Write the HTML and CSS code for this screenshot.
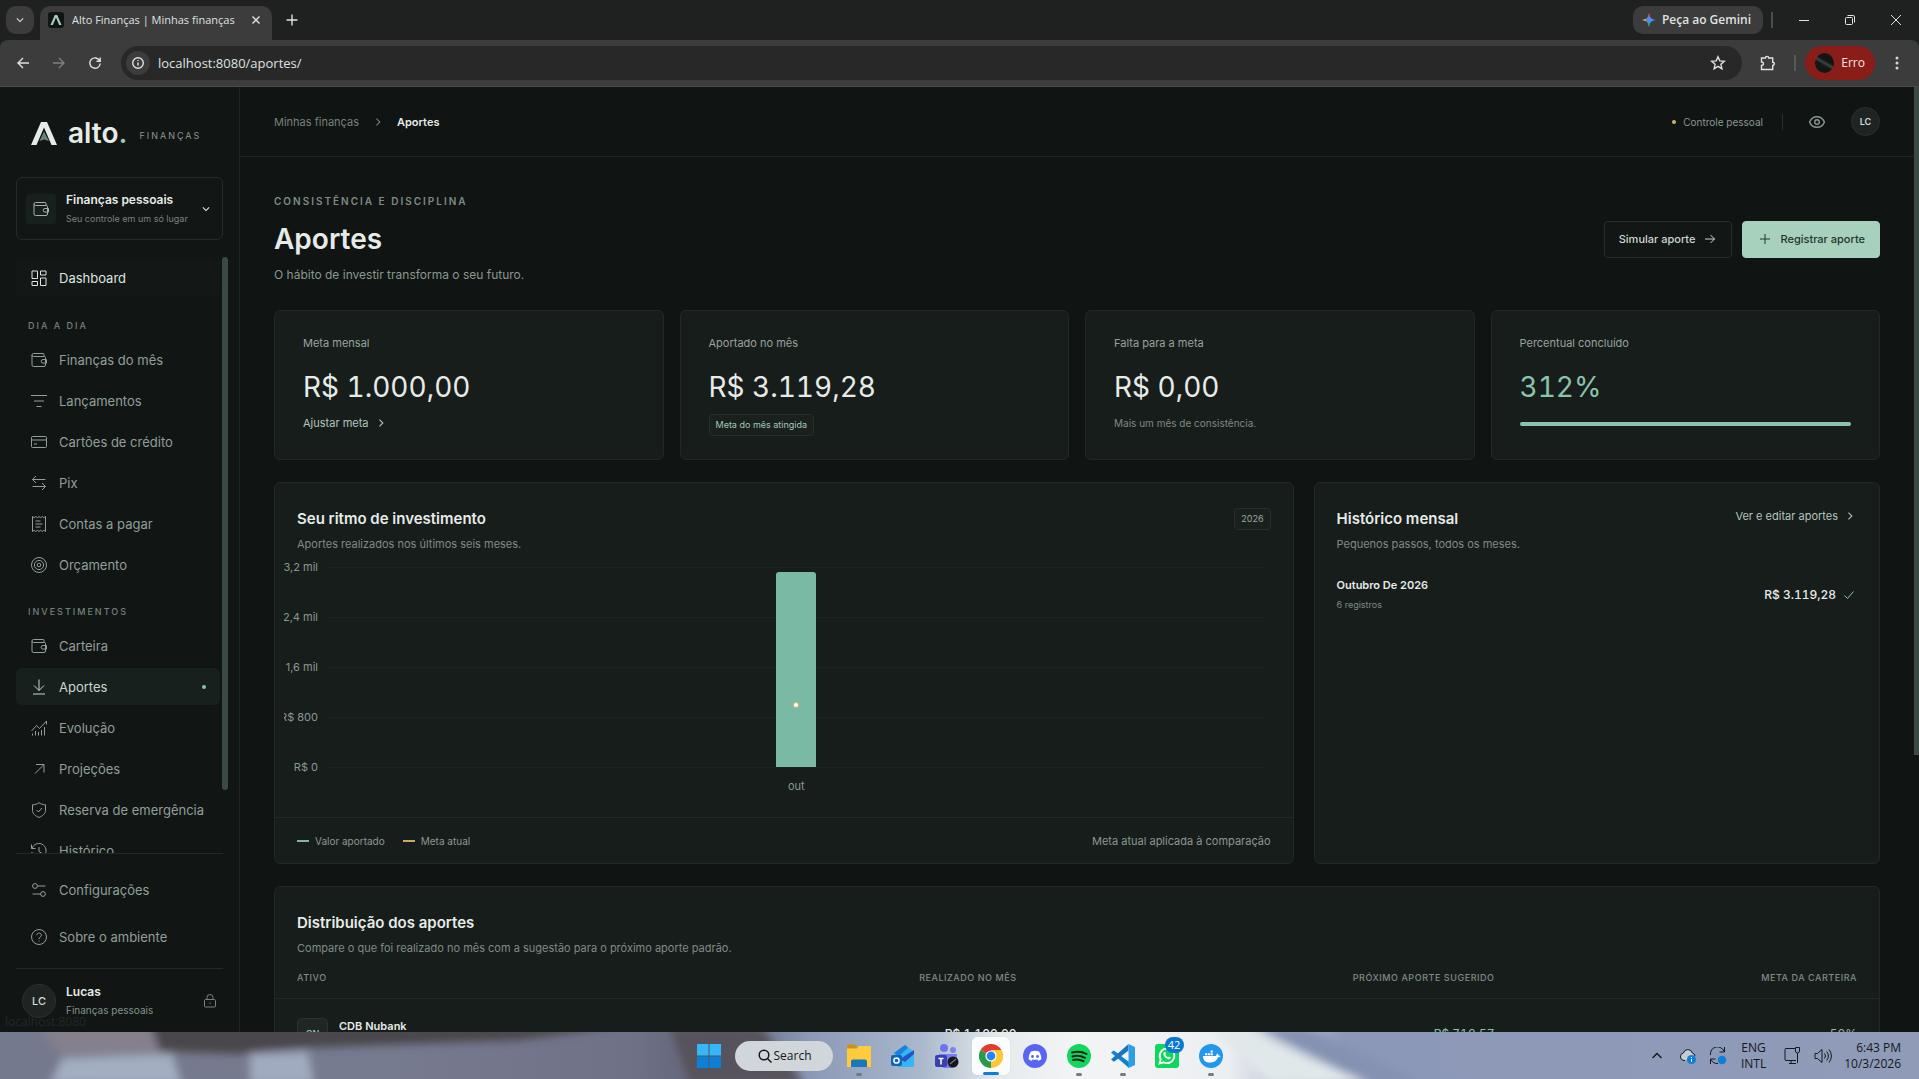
FILE: index.html
```html
<!DOCTYPE html>
<html lang="pt-BR">
<head>
<meta charset="utf-8">
<title>Alto Finanças | Minhas finanças</title>
<link rel="stylesheet" href="styles.css">
</head>
<body>
<svg class="sprite" aria-hidden="true">
  <symbol id="i-wallet" viewBox="0 0 16 16"><path d="M13 4.5V2.5a1 1 0 0 0-1-1H2.5a1.5 1.5 0 0 0 0 3H13.500a1 1 0 0 1 1 1V13a1.500 1.500 0 0 1-1.500 1.500H2.500A1.500 1.500 0 0 1 1 13V3"/><path d="M15.500 7.500h-3.500a1.800 1.800 0 0 0 0 3.600h3.500z"/></symbol>
  <symbol id="i-right" viewBox="0 0 16 16"><path d="M5.500 2.500L11 8l-5.500 5.500"/></symbol>
  <symbol id="i-down" viewBox="0 0 16 16"><path d="M3 5.500l5 5 5-5"/></symbol>
</svg>

<header class="browser">
  <div class="tabs">
    <button class="tab-search" aria-label="Pesquisar guias"><svg class="ic s10 chev"><use href="#i-down"/></svg></button>
    <div class="tab">
      <svg class="favicon" viewBox="0 0 16 16"><rect width="16" height="16" rx="3" fill="#111614"/><path d="M2.500 13L6.800 3h2.400l4.300 10h-2.300L8 5.600 4.800 13z" fill="#a7d0bd"/></svg>
      <span class="tab-title">Alto Finanças | Minhas finanças</span>
      <button class="bare" aria-label="Fechar"><svg class="ic s10 bold" viewBox="0 0 10 10"><path d="M1.500 1.500l7 7M8.500 1.500l-7 7"/></svg></button>
    </div>
    <button class="bare new-tab" aria-label="Nova guia"><svg class="ic s12 bold" viewBox="0 0 12 12"><path d="M6 .5v11M.5 6h11"/></svg></button>
    <div class="window-tools">
      <button class="gemini"><svg class="spark" viewBox="0 0 14 14"><defs><linearGradient id="gm" x1="0" y1="0" x2="1" y2="1"><stop offset="0" stop-color="#ea6a3c"/><stop offset=".45" stop-color="#4b8df8"/><stop offset="1" stop-color="#2f9de0"/></linearGradient></defs><path d="M7 0c.6 4.600 2.400 6.400 7 7-4.600.6-6.400 2.400-7 7-.6-4.600-2.400-6.400-7-7 4.600-.6 6.400-2.400 7-7z" fill="url(#gm)"/><path d="M7 0c-.2 1.600-.6 2.800-1.200 3.800h2.400C7.600 2.800 7.200 1.600 7 0z" fill="#ea4335"/><path d="M0 7c1.600-.2 2.800-.6 3.800-1.200v2.400C2.800 7.600 1.600 7.200 0 7z" fill="#f2b51d"/><path d="M7 14c-.2-1.600-.6-2.800-1.200-3.800h2.400C7.600 11.200 7.200 12.400 7 14z" fill="#27b35a"/></svg>Peça ao Gemini</button>
      <span class="bar"></span>
      <button class="bare win" aria-label="Minimizar"><svg class="ic s10" viewBox="0 0 10 10"><path d="M0 5.500h10"/></svg></button>
      <button class="bare win" aria-label="Restaurar"><svg class="ic s10" viewBox="0 0 10 10"><rect x=".5" y="2.500" width="7" height="7" rx="1"/><path d="M2.500.5H8A1.500 1.500 0 0 1 9.500 2v5.500"/></svg></button>
      <button class="bare win" aria-label="Fechar janela"><svg class="ic s10" viewBox="0 0 10 10"><path d="M0 0l10 10M10 0L0 10"/></svg></button>
    </div>
  </div>
  <div class="toolbar">
    <button class="bare nav-btn" aria-label="Voltar"><svg class="ic s12 bold" viewBox="0 0 12 12"><path d="M12 6H1M6 1L1 6l5 5"/></svg></button>
    <button class="bare nav-btn off" aria-label="Avançar"><svg class="ic s12 bold" viewBox="0 0 12 12"><path d="M0 6h11M6 1l5 5-5 5"/></svg></button>
    <button class="bare nav-btn" aria-label="Recarregar"><svg class="ic s12 bold" viewBox="0 0 12 12"><path d="M10.800 4A5.200 5.200 0 1 0 11.200 6.500M11.200.5V4.200H7.500"/></svg></button>
    <form class="omnibox">
      <span class="info"><svg class="ic s12 bold" viewBox="0 0 12 12"><circle cx="6" cy="6" r="5.300"/><path d="M6 5.500v3M6 3v1"/></svg></span>
      <input class="url" aria-label="Endereço" value="localhost:8080/aportes/">
      <svg class="ic s16 bold" viewBox="0 0 16 16"><path d="M8 1.800l1.800 4.100 4.500.4-3.400 3 1 4.400L8 11.400l-3.900 2.300 1-4.400-3.400-3 4.500-.4z"/></svg>
    </form>
    <button class="bare ext" aria-label="Extensões"><svg class="ic s16 bold" viewBox="0 0 16 16"><path d="M1.500 3h4a1.600 1.600 0 0 1 3.200 0h4v4.200a1.600 1.600 0 0 1 0 3.200v4.100H1.500v-4.100c2.600 0 2.600-3.400 0-3.400z"/></svg></button>
    <span class="bar"></span>
    <button class="profile"><span class="pic"></span>Erro</button>
    <button class="bare more" aria-label="Menu"><svg class="s16" viewBox="0 0 16 16" fill="#d3d6d5"><circle cx="8" cy="3" r="1.500"/><circle cx="8" cy="8" r="1.500"/><circle cx="8" cy="13" r="1.500"/></svg></button>
  </div>
</header>

<div class="app">
  <aside class="sidebar">
    <a class="brand" href="#">
      <svg class="logo" viewBox="0 0 26 23"><path d="M0 23L10 0h6l10 23h-5.500L13 5.500 5.500 23z" fill="#e6ebe8"/><path d="M13 9.500l5 9.500-5-1.500L8.500 19z" fill="#6b7f77"/></svg>
      <span class="word">alto<i>.</i></span><span class="brand-sub">FINANÇAS</span>
    </a>
    <button class="workspace">
      <span class="ws-icon"><svg class="ic s16"><use href="#i-wallet"/></svg></span>
      <span class="ws-text"><strong>Finanças pessoais</strong><small>Seu controle em um só lugar</small></span>
      <svg class="ic s10 chev"><use href="#i-down"/></svg>
    </button>
    <div class="nav-wrap">
    <nav class="nav">
      <a class="item home" href="#"><svg class="ic s16" viewBox="0 0 16 16"><path d="M1 1h5.500v7.500H1zM9.500 1H15v4H9.500zM1 11.500h5.500v4H1zM9.500 8H15v7.500H9.500z"/></svg>Dashboard</a>
      <h2>DIA A DIA</h2>
      <a class="item" href="#"><svg class="ic s16"><use href="#i-wallet"/></svg>Finanças do mês</a>
      <a class="item" href="#"><svg class="ic s16" viewBox="0 0 16 16"><path d="M0 2.500h16M3 8h10M5.500 13.500h5"/></svg>Lançamentos</a>
      <a class="item" href="#"><svg class="ic s16" viewBox="0 0 16 16"><rect x=".5" y="2.500" width="15" height="11" rx="1"/><path d="M.5 6h15M3 10h3"/></svg>Cartões de crédito</a>
      <a class="item" href="#"><svg class="ic s16" viewBox="0 0 16 16"><path d="M14.500 4.500H1.500M5 1L1.500 4.500 5 8M1.500 11.500h13M11 8l3.500 3.500L11 15"/></svg>Pix</a>
      <a class="item" href="#"><svg class="ic s16" viewBox="0 0 16 16"><path d="M1.500.5l1.600 1.200L4.700.5l1.700 1.200L8 .5l1.600 1.200L11.300.5l1.600 1.200L14.500.5v15l-1.600-1.200-1.600 1.200-1.700-1.200L8 15.500l-1.600-1.200-1.700 1.200-1.600-1.200-1.600 1.200z"/><path d="M4.500 5h5M4.500 8h7M4.500 11h5"/></svg>Contas a pagar</a>
      <a class="item" href="#"><svg class="ic s16" viewBox="0 0 16 16"><circle cx="8" cy="8" r="7.500"/><circle cx="8" cy="8" r="4.600"/><circle cx="8" cy="8" r="1.800"/></svg>Orçamento</a>
      <h2>INVESTIMENTOS</h2>
      <a class="item" href="#"><svg class="ic s16"><use href="#i-wallet"/></svg>Carteira</a>
      <a class="item active" href="#"><svg class="ic s16" viewBox="0 0 16 16"><path d="M8 .5v11M3 6.500l5 5 5-5M2 15h12"/></svg>Aportes<span class="dot"></span></a>
      <a class="item" href="#"><svg class="ic s16" viewBox="0 0 16 16"><path d="M.5 11l5-5.500 3 3L15.500 1M15.500 1v3.500M1.500 13.500v2M4.500 11v4.500M7.500 12v3.500M10.500 10v5.500M13.500 7v8.500"/></svg>Evolução</a>
      <a class="item" href="#"><svg class="ic s16" viewBox="0 0 16 16"><path d="M4 12.500l8.500-8.500M5 3.500h8v8"/></svg>Projeções</a>
      <a class="item" href="#"><svg class="ic s16" viewBox="0 0 16 16"><path d="M8 .7c2 1.400 4 2 6.500 2.100v5.500c0 3.500-3 5.700-6.500 7.200-3.500-1.500-6.500-3.700-6.500-7.200V2.800C4 2.700 6 2.100 8 .7z"/><path d="M5.500 8l2 2 3.500-4"/></svg>Reserva de emergência</a>
      <a class="item" href="#"><svg class="ic s16" viewBox="0 0 16 16"><path d="M.5 1.500v4h4M1 5.500A7.200 7.200 0 1 1 .8 9M8 4v4.500l3 2"/></svg>Histórico</a>
    </nav>
    <span class="nav-scroll"></span>
    </div>
    <nav class="nav-foot">
      <a class="item" href="#"><svg class="ic s16" viewBox="0 0 16 16"><circle cx="4" cy="4" r="2.400"/><circle cx="12" cy="12" r="2.400"/><path d="M6.500 4h8M9.500 12h-8"/></svg>Configurações</a>
      <a class="item" href="#"><svg class="ic s16" viewBox="0 0 16 16"><circle cx="8" cy="8" r="7.500"/><path d="M5.800 6.200c0-3 4.600-2.800 4.600 0C10.400 8 8 8 8 10M8 11.500v1"/></svg>Sobre o ambiente</a>
    </nav>
    <div class="user">
      <span class="avatar big">LC</span>
      <span class="user-text"><strong>Lucas</strong><small>Finanças pessoais</small></span>
      <svg class="ic s14" viewBox="0 0 14 14"><rect x="1.500" y="5.500" width="11" height="7.500" rx="1"/><path d="M4 5.500V3.500a3 3 0 0 1 6 0v2M7 8.500v1.500"/></svg>
    </div>
    <span class="status">localhost:8080</span>
  </aside>

  <div class="page">
    <header class="top">
      <nav class="crumbs"><a href="#">Minhas finanças</a><svg class="ic s10 chev"><use href="#i-right"/></svg><strong>Aportes</strong></nav>
      <div class="top-right">
        <span class="mode"><i></i>Controle pessoal</span>
        <span class="rule"></span>
        <button class="bare eye" aria-label="Ocultar valores"><svg class="ic s16 bold" viewBox="0 0 16 16"><path d="M.6 8C2 4.500 4.800 2.700 8 2.700S14 4.500 15.400 8C14 11.500 11.200 13.300 8 13.300S2 11.500.6 8z"/><circle cx="8" cy="8" r="2.300"/></svg></button>
        <span class="avatar">LC</span>
      </div>
    </header>

    <main class="content">
      <section class="hero">
        <div>
          <p class="eyebrow">CONSISTÊNCIA E DISCIPLINA</p>
          <h1>Aportes</h1>
          <p class="lead">O hábito de investir transforma o seu futuro.</p>
        </div>
        <div class="actions">
          <button class="btn">Simular aporte<svg class="ic s10" viewBox="0 0 10 10"><path d="M0 5h9.500M5.500 1l4 4-4 4"/></svg></button>
          <button class="btn primary"><svg class="ic s10" viewBox="0 0 10 10"><path d="M5 0v10M0 5h10"/></svg>Registrar aporte</button>
        </div>
      </section>

      <section class="stats">
        <article class="card stat"><p class="label">Meta mensal</p><p class="value">R$ 1.000,00</p><a class="link" href="#">Ajustar meta<svg class="ic s10 chev"><use href="#i-right"/></svg></a></article>
        <article class="card stat"><p class="label">Aportado no mês</p><p class="value">R$ 3.119,28</p><span class="badge">Meta do mês atingida</span></article>
        <article class="card stat"><p class="label">Falta para a meta</p><p class="value">R$ 0,00</p><p class="note">Mais um mês de consistência.</p></article>
        <article class="card stat"><p class="label">Percentual concluído</p><p class="value good">312%</p><div class="progress"><span></span></div></article>
      </section>

      <section class="panels">
        <article class="card rhythm">
          <header class="panel-head">
            <div><h3>Seu ritmo de investimento</h3><p>Aportes realizados nos últimos seis meses.</p></div>
            <span class="badge year">2026</span>
          </header>
          <div class="chart">
            <div class="tick"><span>3,2 mil</span></div>
            <div class="tick"><span>2,4 mil</span></div>
            <div class="tick"><span>1,6 mil</span></div>
            <div class="tick"><span>R$ 800</span></div>
            <div class="tick"><span>R$ 0</span></div>
            <div class="plot"><div class="col"><i></i></div></div>
            <span class="month">out</span>
          </div>
          <footer class="legend"><span class="key">Valor aportado</span><span class="key gold">Meta atual</span><span class="hint">Meta atual aplicada à comparação</span></footer>
        </article>
        <article class="card history">
          <header class="panel-head">
            <div><h3>Histórico mensal</h3><p>Pequenos passos, todos os meses.</p></div>
            <a class="link" href="#">Ver e editar aportes<svg class="ic s10 chev"><use href="#i-right"/></svg></a>
          </header>
          <div class="entry">
            <div><strong>Outubro De 2026</strong><small>6 registros</small></div>
            <span class="amount">R$ 3.119,28<svg class="ic s10" viewBox="0 0 10 10"><path d="M.5 5.500L3.500 8.500 9.500 1.500"/></svg></span>
          </div>
        </article>
      </section>

      <section class="card dist">
        <header class="panel-head"><div><h3>Distribuição dos aportes</h3><p>Compare o que foi realizado no mês com a sugestão para o próximo aporte padrão.</p></div></header>
        <table>
          <thead><tr><th>ATIVO</th><th>REALIZADO NO MÊS</th><th>PRÓXIMO APORTE SUGERIDO</th><th>META DA CARTEIRA</th></tr></thead>
          <tbody><tr>
            <td><div class="asset"><span class="tile">CN</span><div><strong>CDB Nubank</strong><small>Renda fixa</small></div></div></td>
            <td class="strong">R$ 1.100,00</td><td class="mint">R$ 710,57</td><td>50%</td>
          </tr></tbody>
        </table>
      </section>
    </main>
    <span class="page-scroll"></span>
  </div>
</div>

<footer class="taskbar">
  <svg class="wall" viewBox="0 0 1919 47" preserveAspectRatio="none" aria-hidden="true">
    <defs>
      <linearGradient id="wg"><stop offset="0" stop-color="#75798e"/><stop offset=".2" stop-color="#777b90"/><stop offset=".33" stop-color="#6f7187"/><stop offset=".38" stop-color="#5d5f73"/><stop offset=".42" stop-color="#8a98b6"/><stop offset=".48" stop-color="#a9b8cc"/><stop offset=".52" stop-color="#e6eaec"/><stop offset=".56" stop-color="#f3f4f6"/><stop offset=".64" stop-color="#eceff1"/><stop offset=".7" stop-color="#8c98b7"/><stop offset="1" stop-color="#8f9bb7"/></linearGradient>
      <filter id="soft" x="-10%" y="-50%" width="120%" height="200%"><feGaussianBlur stdDeviation="4"/></filter>
    </defs>
    <rect width="1919" height="47" fill="url(#wg)"/>
    <g filter="url(#soft)">
      <path d="M40 -5H270V22H60z" fill="#85808c"/><path d="M150 -8H400L620-6 520 8 300 16 240 22 160 20z" fill="#4a474c"/>
      <path d="M62 26l110-4 10 30H50z" fill="#a3aec2"/><path d="M250 22l58-2 6 32h-64z" fill="#a0abc0"/>
      <path d="M670-5h90l45 57H690z" fill="#57535c"/><path d="M1210-5h30l130 57h-100z" fill="#e0e8ea"/>
      <path d="M1255-5h50l120 57h-50z" fill="#8592b2"/>
    </g>
  </svg>
  <div class="apps">
    <button class="app-btn" aria-label="Iniciar"><svg viewBox="0 0 24 24"><path d="M0 0h11.500v11.500H0zM12.500 0H24v11.500H12.500z" fill="#35b6f6"/><path d="M0 12.500h11.500V24H0zM12.500 12.500H24V24H12.500z" fill="#0a80d8"/></svg></button>
    <button class="search"><svg viewBox="0 0 14 14"><circle cx="6" cy="6" r="4.800"/><path d="M9.500 9.500l4 4"/></svg>Search</button>
    <button class="app-btn run" aria-label="Explorador"><svg viewBox="0 0 24 24"><path d="M0 2a1.500 1.500 0 0 1 1.500-1.500h6L10 3v5H0z" fill="#c99416"/><path d="M0 4.500h10L11.500 2H23a1 1 0 0 1 1 1v20H0z" fill="#ffcb3d"/><path d="M4 23v-5.500a2 2 0 0 1 2-2h12a2 2 0 0 1 2 2V23z" fill="#1a77bd"/></svg></button>
    <button class="app-btn" aria-label="Outlook"><svg viewBox="0 0 24 24"><path d="M3 9l11-8 9 7v13a2 2 0 0 1-2 2H7z" fill="#36b5f5"/><path d="M3 9L14 1l3 2.500L8 12z" fill="#1d80dc"/><path d="M9 15l14-9v4l-9 8z" fill="#2456c4"/><rect x="0" y="11" width="11" height="11" rx="2" fill="#0f64bd"/><circle cx="5.500" cy="16.500" r="2.600" fill="none" stroke="#fff" stroke-width="1.500"/></svg></button>
    <button class="app-btn" aria-label="Teams"><svg viewBox="0 0 24 24"><circle cx="9" cy="4" r="4" fill="#6d75ea"/><circle cx="18" cy="6" r="3" fill="#7d84f1"/><path d="M4 10h18v8a6 6 0 0 1-6 6h-6a6 6 0 0 1-6-6z" fill="#7780ef"/><rect x="0" y="11" width="12" height="12" rx="2" fill="#3a40b0"/><path d="M3.500 14.500h5M6 14.500v6" stroke="#fff" stroke-width="1.500"/><circle cx="18" cy="18" r="5.500" fill="#16171b"/><path d="M15 20l6-5" stroke="#777" stroke-width="1.200"/></svg></button>
    <button class="app-btn current" aria-label="Chrome"><svg viewBox="0 0 24 24"><path d="M12 12L1.600 6A12 12 0 0 1 22.400 6z" fill="#e33b2e"/><path d="M12 12L22.400 6A12 12 0 0 1 12 24z" fill="#fcc934"/><path d="M12 12l0 12A12 12 0 0 1 1.600 6z" fill="#2a9a48"/><path d="M12 6h10.400a12 12 0 0 1-1.400 14l-9 4 5.500-9z" fill="#fcc934"/><circle cx="12" cy="12" r="5.600" fill="#fff"/><circle cx="12" cy="12" r="4.400" fill="#2684fc"/></svg></button>
    <button class="app-btn" aria-label="Discord"><svg viewBox="0 0 24 24"><circle cx="12" cy="12" r="12" fill="#5865f2"/><path d="M8 7.500c2.500-1 5.500-1 8 0 1.600 2.300 2.500 5 2.300 7.800-1 .8-2 1.200-3 1.500l-.8-1.400c-1.600.5-3.400.5-5 0l-.8 1.400c-1-.3-2-.7-3-1.500C5.500 12.500 6.400 9.800 8 7.500z" fill="#fff"/><circle cx="9.500" cy="12.500" r="1.400" fill="#5865f2"/><circle cx="14.500" cy="12.500" r="1.400" fill="#5865f2"/></svg></button>
    <button class="app-btn run" aria-label="Spotify"><svg viewBox="0 0 24 24"><circle cx="12" cy="12" r="12" fill="#12d65d"/><path d="M5 8.500c5-1.500 10-1 14.500 1.500M5.500 12.500c4-1.200 8.500-.8 12.500 1.300M6 16c3.500-1 7-.6 10.500 1.200" fill="none" stroke="#10241a" stroke-width="2" stroke-linecap="round"/></svg></button>
    <button class="app-btn run" aria-label="Visual Studio Code"><svg viewBox="0 0 24 24"><path d="M0 8.500L2.800 6.500 18 18v6z" fill="#1080d0"/><path d="M0 15.500L17.500 0v6.500L3 17.700z" fill="#1a74bf"/><path d="M17.500 0L24 3v18l-6.500 3z" fill="#2c9fe8"/></svg></button>
    <button class="app-btn" aria-label="WhatsApp"><svg viewBox="0 0 24 24"><rect width="24" height="24" rx="3" fill="#0fd75e"/><path d="M4.500 19.500l1.200-4a7.300 7.300 0 1 1 2.900 2.800z" fill="none" stroke="#fff" stroke-width="1.800"/><path d="M9 8.300c1-.8 1.500 0 2 1.500l-.7 1c.6 1.200 1.500 2 2.700 2.500l1-.9c1.600.6 2 1 1.500 1.900-1 1.500-3 1-4.700-.2C8.500 12.300 7.600 10 9 8.300z" fill="#fff"/></svg><span class="count">42</span></button>
    <button class="app-btn run" aria-label="Docker"><svg viewBox="0 0 24 24"><circle cx="12" cy="12" r="12" fill="#2396ed"/><path d="M4 12h13c.5-1.500 1-2.200 1.600-2.500.7.600 1 1.200 1 2 1 0 1.600.2 2 .5-.6 1-1.600 1.400-2.800 1.400C17.500 17 14.500 18.500 10.500 18.500 6 18.500 4 16 4 12z" fill="#fff"/><path d="M6 9.200h2.200v2H6zM8.800 9.200H11v2H8.800zM11.600 9.200h2.200v2h-2.200zM11.600 6.500h2.200v2h-2.200z" fill="#fff"/></svg></button>
  </div>
  <div class="tray">
    <svg class="ic s12 bold" viewBox="0 0 12 12"><path d="M1.500 8L6 3.500 10.500 8"/></svg>
    <svg class="ic s18" viewBox="0 0 18 18"><path d="M6 13.500H5a3.800 3.800 0 0 1-.6-7.500A4.600 4.600 0 0 1 13.300 6 3.500 3.500 0 0 1 16 9" fill="#c7ccd4"/><circle cx="12.500" cy="12.500" r="4.500" fill="#0a80dc" stroke="none"/><path d="M12.500 11.800v3M12.500 10v1" stroke="#fff"/></svg>
    <svg class="ic s18" viewBox="0 0 18 18"><path d="M1.500 8A7 7 0 0 1 15 4.500M15.500 0v5h-5M1.500 17v-5h5M2 12.500a7 7 0 0 0 7 4"/><circle cx="13" cy="13" r="4.300" fill="#0a80dc" stroke="none"/></svg>
    <span class="lang">ENG<br>INTL</span>
    <svg class="ic s18" viewBox="0 0 18 18"><path d="M11 1.500H2A1 1 0 0 0 1 2.500v10a1 1 0 0 0 1 1h10M5 16.500h7M7 13.500v3M11.500.5h4v3.500a2 2 0 0 1-4 0zM13.500 6v10"/></svg>
    <svg class="ic s18" viewBox="0 0 18 18"><path d="M1 6.500h2.500L8 2.500v13l-4.500-4H1zM10.500 6.500a4 4 0 0 1 0 5M12.700 4.500a7 7 0 0 1 0 9M15 2.500a10 10 0 0 1 0 13"/></svg>
    <span class="clock">6:43 PM<br>10/3/2026</span>
  </div>
</footer>
</body>
</html>
```
FILE: styles.css
```css
* { box-sizing: border-box; }
:root { --ui: Inter, "Liberation Sans", sans-serif; --sys: "Open Sans", "Noto Sans", sans-serif; --line: #222826; --card: #171d1b; --muted: #8b9791; --mint: #8ac3ab; }
html, body { height: 100%; }
body { margin: 0; display: flex; flex-direction: column; overflow: hidden; background: #101413; color: #e6ebe8; font-family: var(--ui); font-size: 11px; line-height: 16px; }
h1, h2, h3, p { margin: 0; }
a { color: inherit; text-decoration: none; }
button, input { font: inherit; color: inherit; }
button { border: 0; cursor: pointer; }
small { font-size: 9px; }
.sprite { position: absolute; width: 0; height: 0; }
.ic { flex: none; fill: none; stroke: currentColor; stroke-width: 1; }
.bold { stroke-width: 1.4; }
.chev { stroke-width: 1.7; }
.s10 { width: 10px; height: 10px; }
.s12 { width: 12px; height: 12px; }
.s14 { width: 14px; height: 14px; }
.s16 { width: 16px; height: 16px; }
.s18 { width: 18px; height: 18px; }
.bare { display: grid; place-items: center; padding: 0; background: none; }

/* browser chrome */
.browser { flex: none; background: #1f2120; font-family: var(--sys); color: #dfe2e1; font-size: 12px; }
.tabs { display: flex; align-items: center; height: 40px; padding-left: 6px; }
.tab-search { display: grid; place-items: center; width: 28px; height: 28px; border-radius: 10px; background: #3c3c3c; padding: 0; }
.tab { display: flex; align-items: center; align-self: end; gap: 8px; width: 232px; height: 34px; margin-left: 6px; padding: 0 11px 6px 8px; border-radius: 10px 10px 0 0; background: #3c3c3c; }
.favicon { width: 16px; height: 16px; flex: none; }
.tab-title { flex: 1; white-space: nowrap; overflow: hidden; font-size: 11px; }
.new-tab { width: 40px; height: 28px; }
.window-tools { display: flex; align-items: center; margin-left: auto; }
.gemini { display: flex; align-items: center; gap: 6px; height: 28px; padding: 0 12px 0 9px; border-radius: 10px; background: #3c3c3c; font-weight: 600; white-space: nowrap; }
.spark { width: 14px; height: 14px; }
.bar { width: 2px; height: 16px; margin: 0 8px; background: #4a4d4b; }
.win { width: 46px; height: 40px; }
.toolbar { display: flex; align-items: center; height: 47px; padding: 0 10px 1px 5px; background: #3c3c3c; border-bottom: 1px solid #4a4c4b; border-radius: 8px 8px 0 0; }
.nav-btn { width: 36px; height: 34px; }
.off { color: #7d817f; }
.omnibox { flex: 1; display: flex; align-items: center; height: 34px; margin-left: 8px; padding: 0 16px 0 5px; border-radius: 17px; background: #282828; }
.info { display: grid; place-items: center; width: 24px; height: 24px; border-radius: 50%; background: #3c3c3c; }
.url { flex: 1; margin-left: 8px; padding: 0; border: 0; outline: 0; background: none; font-size: 13px; }
.ext { width: 52px; height: 34px; }
.toolbar .bar { margin: 0 9px 0 0; background: #565b58; }
.profile { display: flex; align-items: center; gap: 7px; height: 34px; width: 70px; padding: 0 10px; border-radius: 17px; background: #8b1d18; color: #fbe5e2; }
.pic { width: 20px; height: 20px; border-radius: 50%; background: linear-gradient(30deg, #121615 40%, #3d4442 50%, #121615 60%); }
.more { width: 34px; height: 34px; margin-left: 5px; margin-right: -5px; }

/* shell */
.app { flex: 1; min-height: 0; display: flex; overflow: hidden; }
.sidebar { position: relative; flex: none; display: flex; flex-direction: column; width: 240px; padding: 29px 16px 0; background: #111615; border-right: 1px solid #1e2422; }
.brand { display: flex; align-items: center; padding-left: 15px; height: 34px; }
.logo { width: 26px; height: 23px; margin-right: 11px; }
.word { font-size: 28px; font-weight: 600; line-height: 32px; }
.word i { font-style: normal; color: #9fc7b5; }
.brand-sub { margin: 6px 0 0 12px; font-size: 9px; letter-spacing: 2px; color: #8a9590; }
.workspace { display: flex; align-items: center; gap: 10px; height: 63px; margin-top: 27px; padding: 0 11px 0 9px; border: 1px solid #252b28; border-radius: 6px; background: #121715; text-align: left; }
.ws-icon { display: grid; place-items: center; width: 30px; height: 30px; border-radius: 4px; background: #18201d; color: #a5afaa; }
.ws-text, .user-text { flex: 1; display: flex; flex-direction: column; gap: 4px; white-space: nowrap; }
.workspace strong { font-size: 12px; font-weight: 600; line-height: 16px; }
.workspace small { color: #78837e; font-size: 9px; line-height: 14px; }
.nav-wrap { flex: 1; min-height: 0; display: flex; gap: 2px; margin-top: 17px; margin-right: -5px; overflow: hidden; }
.nav { flex: 1; display: flex; flex-direction: column; gap: 4px; padding-top: 2px; }
.nav-scroll { width: 6px; height: 533px; border-radius: 3px; background: #3a4944; }
.item { flex: none; display: flex; align-items: center; gap: 12px; height: 37px; padding: 0 14px 0 15px; border-radius: 6px; color: #929e98; font-size: 13px; white-space: nowrap; }
.home { color: #dfe5e2; background: #131816; }
.nav h2 { margin: 17px 0 3px 12px; font-size: 9px; font-weight: 500; line-height: 16px; letter-spacing: 2px; color: #75807b; }
.nav .home + h2 { margin-top: 18px; }
.active { color: #c5d8cf; background: #18201d; }
.dot { width: 4px; height: 4px; margin-left: auto; border-radius: 50%; background: var(--mint); }
.nav-foot { display: flex; flex-direction: column; gap: 10px; padding: 17px 0 13px; border-top: 1px solid var(--line); }
.user { display: flex; align-items: center; gap: 10px; height: 64px; padding: 0 6px; border-top: 1px solid var(--line); color: #77827d; }
.user-text { gap: 2px; }
.user strong { font-size: 12px; font-weight: 600; color: #e6ebe8; }
.user small { font-size: 10px; line-height: 16px; color: #84908a; }
.status { position: absolute; left: 5px; bottom: 1px; color: #222826; font: 12px/18px var(--sys); }
.avatar { display: grid; place-items: center; width: 29px; height: 29px; border: 1px solid #2b312f; border-radius: 50%; background: #1f2423; color: #d3dad6; font-size: 9px; font-weight: 600; }
.big { width: 34px; height: 34px; font-size: 11px; font-weight: 500; }

/* page */
.page { position: relative; flex: 1; min-width: 0; }
.page-scroll { position: absolute; top: 0; right: 0; width: 5px; height: 668px; background: #3a4944; }
.top { display: flex; align-items: center; justify-content: space-between; height: 70px; margin-right: 5px; padding: 0 34px; border-bottom: 1px solid #1e2422; }
.crumbs { display: flex; align-items: center; gap: 14px; color: #75807b; }
.crumbs strong { font-weight: 600; color: #e6ebe8; }
.top-right { display: flex; align-items: center; }
.mode { display: flex; align-items: center; gap: 7px; color: #8b9791; font-size: 10px; }
.mode i { width: 4px; height: 4px; border-radius: 50%; background: #c9b172; }
.rule { width: 1px; height: 16px; margin: 0 26px 0 19px; background: #2a302e; }
.eye { margin-right: 26px; color: #8b9791; }
.content { display: flex; flex-direction: column; padding: 36px 39px 0 34px; }
.hero { display: flex; justify-content: space-between; align-items: center; }
.eyebrow { font-size: 10px; font-weight: 600; letter-spacing: 2px; color: #7f8b85; }
h1 { margin-top: 8px; font-size: 28px; font-weight: 600; line-height: 44px; }
.lead { margin-top: 4px; font-size: 12px; line-height: 20px; color: var(--muted); }
.actions { display: flex; gap: 10px; }
.btn { display: flex; align-items: center; gap: 10px; height: 37px; padding: 0 16px 0 14px; border: 1px solid #272d2b; border-radius: 4px; background: #121715; color: #cdd6d1; font-weight: 500; }
.primary { padding: 0 14px 0 17px; border-color: #a7d0bd; background: #a7d0bd; color: #23362e; }
.card { border: 1px solid var(--line); border-radius: 6px; background: var(--card); }
.stats { display: grid; grid-template-columns: repeat(4, 1fr); gap: 16px; margin-top: 25px; }
.stat { height: 150px; padding: 24px 28px 0; }
.label { color: #97a39d; }
.value { margin: 15px 0 7px; font-size: 28px; line-height: 42px; font-variant-numeric: tabular-nums; }
.good { color: var(--mint); }
.link { display: inline-flex; align-items: center; gap: 7px; color: #b4c4bc; white-space: nowrap; }
.stat .link { display: flex; }
.note { font-size: 10px; color: #7d8983; }
.badge { display: inline-block; padding: 2px 6px; border: 1px solid #272e2b; border-radius: 4px; background: #1a201e; color: #a3c8b7; font-size: 9px; line-height: 16px; }
.stat .badge { display: block; width: max-content; margin-top: -1px; }
.progress { height: 4px; margin-top: 14px; border-radius: 2px; background: #262d2a; overflow: hidden; }
.stat .good { margin-bottom: 0; }
.progress span { display: block; height: 100%; background: #8ac3ab; }
.panels { display: grid; grid-template-columns: 1.8fr 1fr; gap: 20px; margin-top: 22px; }
.panel-head { display: flex; justify-content: space-between; align-items: flex-start; padding: 25px 22px 0; }
.panel-head h3 { font-size: 15px; font-weight: 600; line-height: 22px; }
.panel-head p { margin-top: 6px; color: #7f8b85; }
.year { color: #9aa6a0; }
.rhythm { display: flex; flex-direction: column; height: 382px; }
.chart { position: relative; flex: 1; padding: 7px 28px 0 9px; color: var(--muted); }
.tick { display: flex; align-items: center; gap: 8px; height: 16px; margin-bottom: 34px; }
.tick span { display: flex; justify-content: flex-end; width: 34px; overflow: hidden; white-space: nowrap; }
.tick::after { content: ""; flex: 1; border-top: 1px solid #1b2220; }
.plot { position: absolute; top: 15px; bottom: 50px; left: 53px; right: 28px; display: flex; justify-content: center; align-items: flex-end; }
.col { display: flex; justify-content: center; align-items: flex-end; width: 40px; height: 195px; padding-bottom: 59px; border-radius: 3px 3px 0 0; background: #7abaa4; }
.col i { width: 6px; height: 6px; border: 1px solid #d3b06b; border-radius: 50%; background: #fff; }
.month { position: absolute; left: 53px; right: 28px; bottom: 23px; text-align: center; }
.legend { display: flex; align-items: center; gap: 18px; height: 46px; padding: 0 22px; border-top: 1px solid var(--line); color: var(--muted); font-size: 10px; }
.key { display: flex; align-items: center; gap: 6px; }
.key::before { content: ""; width: 12px; height: 2px; background: #7abaa4; }
.gold::before { background: #c9a765; }
.hint { margin-left: auto; font-size: 11px; }
.history .link { margin-right: 2px; }
.entry { display: flex; justify-content: space-between; align-items: center; padding: 25px 25px 0 22px; }
.entry strong, .entry small { display: block; }
.entry strong { font-weight: 600; }
.entry small { margin-top: 4px; color: #7f8b85; }
.amount { display: flex; align-items: center; gap: 8px; font-size: 12px; font-weight: 500; font-variant-numeric: tabular-nums; }
.amount svg { color: var(--mint); }
.dist { margin-top: 22px; }
table { width: 100%; margin-top: 2px; border-collapse: collapse; font-variant-numeric: tabular-nums; }
th { height: 40px; padding: 12px 22px 0 0; border-bottom: 1px solid var(--line); font-size: 9px; font-weight: 500; letter-spacing: .06em; text-align: right; vertical-align: top; color: #7f8b85; }
th:first-child, td:first-child { width: 25.6%; padding-left: 22px; text-align: left; }
th:nth-child(2) { width: 22%; }
th:nth-child(3) { width: 29.8%; }
td { padding: 19px 22px 17px 0; text-align: right; font-size: 12px; color: #a3aea9; }
.strong { color: #e6ebe8; font-weight: 500; }
.mint { color: var(--mint); }
.asset { display: flex; align-items: center; gap: 11px; font-size: 11px; }
.asset strong, .asset small { display: block; }
.asset strong { font-weight: 600; color: #e6ebe8; }
.tile { display: grid; place-items: center; width: 31px; height: 31px; border: 1px solid #2b322f; border-radius: 5px; background: #202624; color: var(--mint); font-size: 9px; font-weight: 600; }

/* taskbar */
.taskbar { position: relative; flex: none; display: flex; justify-content: center; align-items: center; height: 47px; font: 12px/16px var(--sys); color: #15181c; }
.wall { position: absolute; inset: 0; width: 100%; height: 100%; }
.apps { position: relative; display: flex; align-items: center; gap: 6px; }
.app-btn { position: relative; display: grid; place-items: center; width: 38px; height: 38px; padding: 0; border-radius: 5px; background: none; }
.app-btn svg { width: 24px; height: 24px; }
.current { background: #fbfcfd; box-shadow: 0 0 1px #b6bcc2; }
.run::after, .current::after { content: ""; position: absolute; bottom: -1px; width: 6px; height: 3px; border-radius: 2px; background: #767b82; }
.current::after { width: 16px; bottom: 0; background: #0a80d8; }
.search { display: flex; align-items: center; gap: 2px; width: 98px; height: 30px; margin: 0 1px; padding: 0 23px; border-radius: 15px; background: #d0d6d9; }
.search svg { width: 14px; height: 14px; fill: none; stroke: #15181c; stroke-width: 1.500; flex: none; }
.count { position: absolute; top: 0; right: 2px; min-width: 19px; border-radius: 8px; background: #0a78d0; color: #fff; font-size: 11px; line-height: 16px; }
.tray { position: absolute; right: 18px; display: flex; align-items: center; gap: 12px; }
.tray .s12 { margin-right: 4px; }
.lang { margin: 0 6px 0 2px; text-align: center; }
.clock { text-align: right; }
```
